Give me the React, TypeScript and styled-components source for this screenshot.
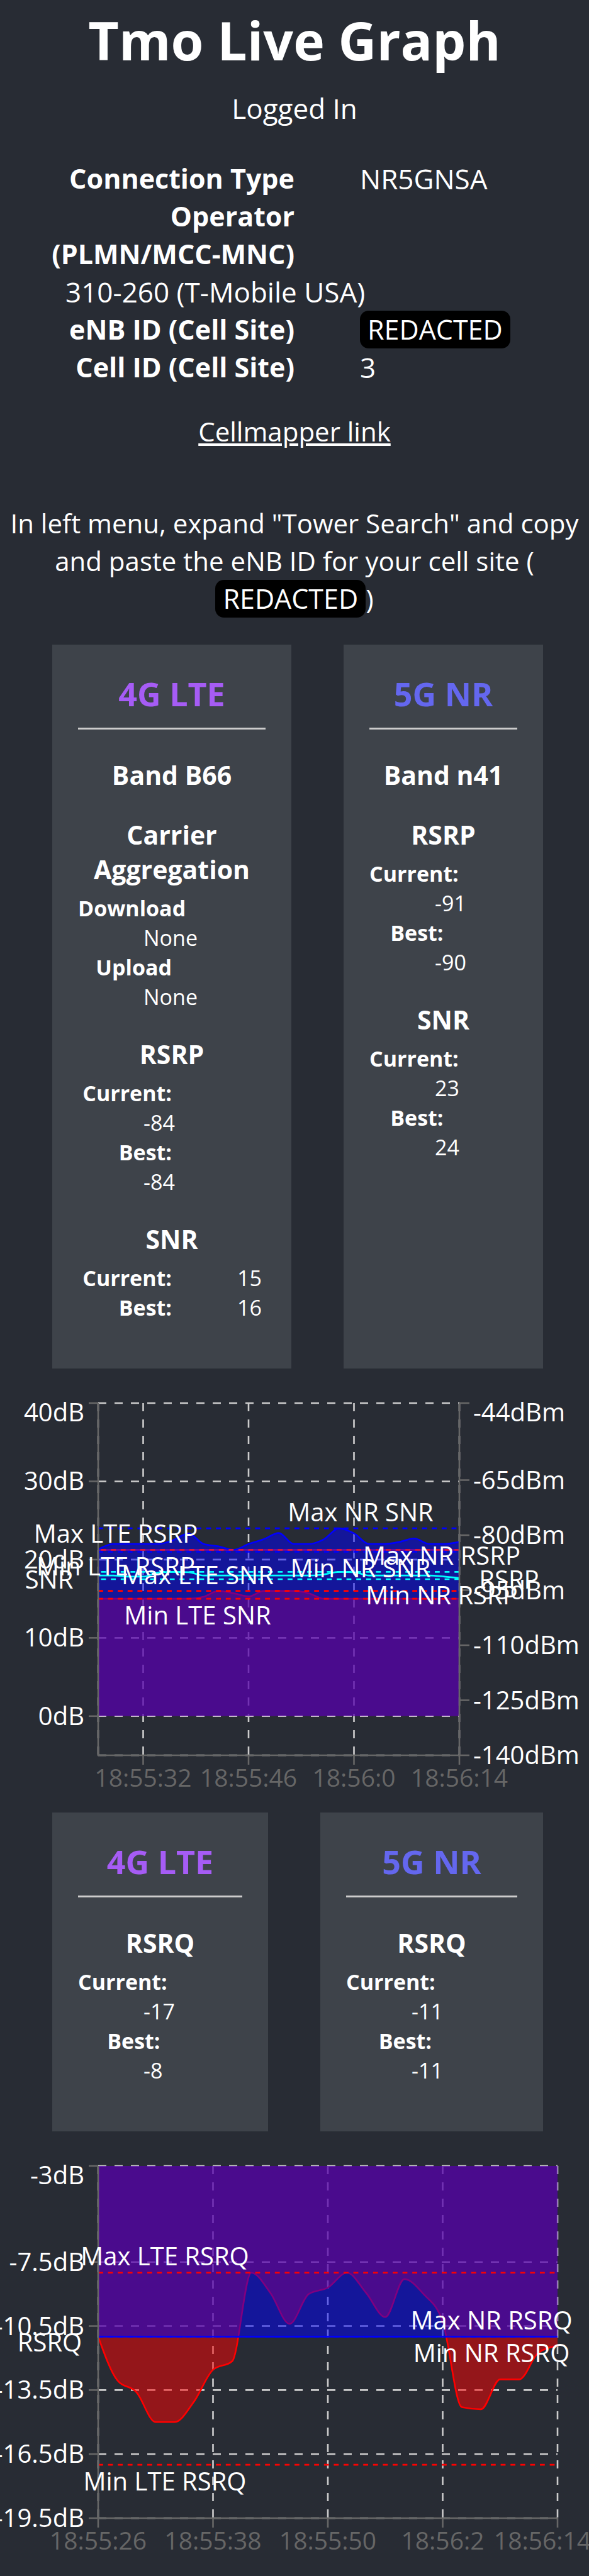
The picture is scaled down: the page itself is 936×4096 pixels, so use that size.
import React from "react";
import styled, { createGlobalStyle } from "styled-components";

const GlobalStyle = createGlobalStyle`
  *, *::before, *::after { box-sizing: border-box; }
  body {
    margin: 0;
    background: #282c34;
    color: #fff;
    font-family: "Segoe UI", "Open Sans", "Noto Sans", sans-serif;
    overflow-x: hidden;
  }
`;

const Page = styled.main`
  display: flex;
  flex-direction: column;
  text-align: center;
  line-height: 60px;
`;

const Title = styled.h1`
  margin: 4px 0 18px;
  font-size: 84px;
  line-height: 120px;
`;

const Status = styled.p`
  margin: 0 0 52px;
  font-size: 44px;
`;

const InfoList = styled.dl`
  margin: 0;
  text-align: left;
`;

const InfoTerm = styled.dt`
  display: inline-block;
  width: 50%;
  vertical-align: top;
  font-size: 43px;
  font-weight: 700;
  text-align: right;
`;

const NoBreak = styled.span`
  white-space: nowrap;
`;

const InfoValue = styled.dd`
  display: inline-block;
  margin: 0 0 0 104px;
  vertical-align: top;
  font-size: 44px;
`;

const Redacted = styled.span`
  display: inline-block;
  padding: 0 12px;
  border-radius: 14px;
  background: #000;
  font-size: 43px;
  vertical-align: top;
`;

const LinkLine = styled.p`
  margin: 42px 0 86px;
  font-size: 42px;
`;

const MapLink = styled.a`
  color: #fff;
  text-decoration: underline;
`;

const Note = styled.p`
  margin: 0 0 43px;
  font-size: 42px;
`;

const CardRow = styled.section<{ $columns: string }>`
  display: grid;
  grid-template-columns: ${(p) => p.$columns};
  gap: 83px;
  margin-bottom: 42px;
  padding: 0 73px 0 83px;
`;

const Card = styled.article`
  padding: 42px 41px 73px;
  background: #3e434a;
`;

const CardTitle = styled.h2<{ $color: string }>`
  margin: 0;
  color: ${(p) => p.$color};
  font-size: 52px;
  line-height: 72px;
`;

const Rule = styled.hr`
  height: 3px;
  margin: 18px 0 45px;
  border: 0;
  background: #ccc;
`;

const Metric = styled.div`
  & + & {
    margin-top: 40px;
  }
`;

const MetricTitle = styled.h3`
  margin: 0;
  font-size: 41px;
  line-height: 55px;
`;

const MetricList = styled.dl`
  margin: 11px 0 0;
  font-size: 34px;
  line-height: 47px;
  text-align: left;
`;

const MetricTerm = styled.dt`
  display: inline-block;
  width: 50%;
  font-weight: 700;
  text-align: right;
  vertical-align: top;
`;

const MetricValue = styled.dd`
  display: inline-block;
  margin: 0 0 0 104px;
  vertical-align: top;
`;

const ChartSvg = styled.svg`
  display: block;
  width: 100%;
  height: auto;
  overflow: hidden;
`;

const Label = styled.text`
  fill: #fff;
  font-size: 40px;
`;

const TimeLabel = styled.text`
  fill: #666;
  font-size: 39px;
`;

type Pair = [string, string];
type Point = [number, number];
type MetricData = { title: string; rows?: Pair[] };

const LTE = "#a65cf5";
const NR = "#6467ef";

function Metrics({ items }: { items: MetricData[] }) {
  return (
    <>
      {items.map((item) => (
        <Metric key={item.title}>
          <MetricTitle>{item.title}</MetricTitle>
          {item.rows && (
            <MetricList>
              {item.rows.map(([term, value]) => (
                <React.Fragment key={term}>
                  <MetricTerm>{term}</MetricTerm>
                  <MetricValue>{value}</MetricValue>
                </React.Fragment>
              ))}
            </MetricList>
          )}
        </Metric>
      ))}
    </>
  );
}

function SignalCard({ title, color, items }: { title: string; color: string; items: MetricData[] }) {
  return (
    <Card>
      <CardTitle $color={color}>{title}</CardTitle>
      <Rule />
      <Metrics items={items} />
    </Card>
  );
}

/** Cubic interpolation that never overshoots between neighbouring samples. */
function monotone(points: Point[]): string {
  const n = points.length;
  const slope = (i: number) => (points[i + 1][1] - points[i][1]) / (points[i + 1][0] - points[i][0]);
  const m = points.map((_, i) => {
    if (i === 0 || i === n - 1) return 0;
    const a = slope(i - 1);
    const b = slope(i);
    return a * b <= 0 ? 0 : Math.sign(a) * Math.min(Math.abs(a), Math.abs(b), 0.25 * Math.abs(a + b)) * 2;
  });
  m[0] = 1.5 * slope(0) - m[1] / 2;
  m[n - 1] = 1.5 * slope(n - 2) - m[n - 2] / 2;
  let d = `M${points[0][0]},${points[0][1]}`;
  for (let i = 0; i < n - 1; i++) {
    const [x0, y0] = points[i];
    const [x1, y1] = points[i + 1];
    const h = (x1 - x0) / 3;
    d += `C${x0 + h},${y0 + h * m[i]} ${x1 - h},${y1 - h * m[i + 1]} ${x1},${y1}`;
  }
  return d;
}

const TOP = 13;
const BOTTOM = 573;
const LEFT = 156;

const scale = (max: number, min: number) => (v: number) => TOP + ((max - v) / (max - min)) * (BOTTOM - TOP);

function sample(values: number[], right: number, y: (v: number) => number): Point[] {
  return values.map((v, i) => [LEFT + ((right - LEFT) * i) / (values.length - 1), y(v)]);
}

function Area({ points, base, color }: { points: Point[]; base: number; color: string }) {
  const d = monotone(points);
  return (
    <g>
      <path d={`${d}V${base}H${points[0][0]}Z`} fill={color} fillOpacity={0.5} />
      <path d={d} fill="none" stroke={color} strokeWidth={2.6} />
    </g>
  );
}

function Grid({ xs, ys, right }: { xs: number[]; ys: number[]; right: number }) {
  return (
    <g stroke="#ccc" strokeWidth={2.6} strokeDasharray="13 13">
      {ys.map((y) => <line key={`y${y}`} x1={LEFT} x2={right} y1={y} y2={y} />)}
      {xs.map((x) => <line key={`x${x}`} x1={x} x2={x} y1={TOP} y2={BOTTOM} />)}
    </g>
  );
}

function RefLine({ y, from, to, color }: { y: number; from: number; to: number; color: string }) {
  return <line x1={from} x2={to} y1={y} y2={y} stroke={color} strokeWidth={2.6} strokeDasharray="7.8 7.8" />;
}

const snrY = scale(40, -5);
const rsrpY = scale(-44, -140);
const rsrqY = scale(-3, -19.5);

const nrSnr = [21.3, 22, 22, 22, 22, 22.5, 23.35, 22, 21.7, 21.25, 22, 22.6, 23.4, 22, 22, 22.6, 24, 23.35, 22, 22, 22.25, 22.7, 22, 22, 22.25];
const lteSnr = [15, 15, 15, 15, 15, 15, 15, 15.25, 16, 15.7, 15.3, 16, 16, 16, 15.7, 15, 15, 15, 15, 15, 15, 15, 15, 15, 15];
const nrRsrp = [-91, -91, -91.3, -91.3, -90.2, -90, -90.1, -91, -91, -91, -91, -91, -91, -91, -91, -90.7, -90, -90.1, -91, -91, -91, -91, -91, -91.3, -91.7];
const lteRsrq = [-11, -13.04, -13.6, -15, -15, -14.05, -12.55, -12.15, -8, -8.95, -10.4, -9, -8.7, -8, -8.95, -10.08, -8.3, -9, -10.3, -14.3, -14.4, -13, -13, -11.75, -11.43];

function SnrChart() {
  const right = 730;
  const xs = [227.5, 395, 562.5, right];
  const left = [40, 30, 20, 10, 0];
  const dbm = [-44, -65, -80, -95, -110, -125, -140];
  const times = ["18:55:32", "18:55:46", "18:56:0", "18:56:14"];
  return (
    <ChartSvg viewBox="0 0 936 664" role="img" aria-label="SNR and RSRP over time">
      <Grid xs={[LEFT, ...xs]} ys={[...left.map(snrY), BOTTOM]} right={right} />
      <line x1={LEFT} x2={right} y1={rsrpY(-84)} y2={rsrpY(-84)} stroke="#dc143c" strokeWidth={2.6} />
      <Area points={sample(lteSnr, right, snrY)} base={snrY(0)} color="#f00" />
      <Area points={sample(nrSnr, right, snrY)} base={snrY(0)} color="#00f" />
      <path d={monotone(sample(nrRsrp, right, rsrpY))} fill="none" stroke="#0ff" strokeWidth={2.6} />
      <RefLine y={snrY(24)} from={LEFT} to={right} color="#00f" />
      <RefLine y={snrY(21)} from={LEFT} to={right} color="#00f" />
      <RefLine y={snrY(16)} from={LEFT} to={right} color="#f00" />
      <RefLine y={snrY(15)} from={LEFT} to={right} color="#f00" />
      <RefLine y={rsrpY(-84)} from={right} to={LEFT} color="#dc143c" />
      <RefLine y={rsrpY(-90)} from={right} to={LEFT} color="#0ff" />
      <RefLine y={rsrpY(-92)} from={right} to={LEFT} color="#0ff" />
      <g stroke="#666" strokeWidth={2.6}>
        <path d={`M${LEFT},${TOP}V${BOTTOM}H${right}V${TOP}`} fill="none" />
        {left.map((v) => <line key={v} x1={LEFT - 15} x2={LEFT} y1={snrY(v)} y2={snrY(v)} />)}
        {dbm.map((v) => <line key={v} x1={right} x2={right + 16} y1={rsrpY(v)} y2={rsrpY(v)} />)}
        {xs.map((x) => <line key={x} x1={x} x2={x} y1={BOTTOM} y2={BOTTOM + 15} />)}
      </g>
      {left.map((v) => <Label key={v} x={134} y={v === 40 ? 42 : snrY(v) + 14} textAnchor="end">{`${v}dB`}</Label>)}
      {dbm.map((v) => <Label key={v} x={752} y={v === -44 ? 42 : rsrpY(v) + 14}>{`${v}dBm`}</Label>)}
      {times.map((t, i) => <TimeLabel key={t} x={xs[i]} y={623} textAnchor="middle">{t}</TimeLabel>)}
      <g textAnchor="middle">
        <Label x={78} y={308}>SNR</Label>
        <Label x={809} y={308}>RSRP</Label>
        <Label x={573} y={201}>Max NR SNR</Label>
        <Label x={573} y={290}>Min NR SNR</Label>
        <Label x={314} y={301}>Max LTE SNR</Label>
        <Label x={314} y={365}>Min LTE SNR</Label>
        <Label x={184} y={235}>Max LTE RSRP</Label>
        <Label x={184} y={287}>Min LTE RSRP</Label>
        <Label x={702} y={270}>Max NR RSRP</Label>
        <Label x={702} y={333}>Min NR RSRP</Label>
      </g>
    </ChartSvg>
  );
}

function RsrqChart() {
  const right = 886;
  const xs = [LEFT, 338.5, 521, 703.5, right];
  const ticks = [-3, -7.5, -10.5, -13.5, -16.5, -19.5];
  const times = ["18:55:26", "18:55:38", "18:55:50", "18:56:2", "18:56:14"];
  return (
    <ChartSvg viewBox="0 0 936 664" role="img" aria-label="RSRQ over time">
      <Grid xs={xs} ys={ticks.map(rsrqY)} right={right} />
      <Area points={sample(lteRsrq, right, rsrqY)} base={TOP} color="#f00" />
      <Area points={sample(Array(25).fill(-11), right, rsrqY)} base={TOP} color="#00f" />
      <RefLine y={rsrqY(-11)} from={LEFT} to={right} color="#00f" />
      <RefLine y={rsrqY(-8)} from={LEFT} to={right} color="#f00" />
      <RefLine y={rsrqY(-17)} from={LEFT} to={right} color="#f00" />
      <g stroke="#666" strokeWidth={2.6}>
        <path d={`M${LEFT},${TOP}V${BOTTOM}H${right}`} fill="none" />
        {ticks.map((v) => <line key={v} x1={LEFT - 15} x2={LEFT} y1={rsrqY(v)} y2={rsrqY(v)} />)}
        {xs.map((x) => <line key={x} x1={x} x2={x} y1={BOTTOM} y2={BOTTOM + 15} />)}
      </g>
      {ticks.map((v) => <Label key={v} x={134} y={v === -3 ? 42 : rsrqY(v) + 14} textAnchor="end">{`${v}dB`}</Label>)}
      {times.map((t, i) => <TimeLabel key={t} x={i === 4 ? 862 : xs[i]} y={623} textAnchor="middle">{t}</TimeLabel>)}
      <g textAnchor="middle">
        <Label x={79} y={308}>RSRQ</Label>
        <Label x={262} y={171}>Max LTE RSRQ</Label>
        <Label x={262} y={529}>Min LTE RSRQ</Label>
        <Label x={781} y={273}>Max NR RSRQ</Label>
        <Label x={781} y={325}>Min NR RSRQ</Label>
      </g>
    </ChartSvg>
  );
}

const info: { id: string; term: React.ReactNode; value: React.ReactNode }[] = [
  { id: "type", term: "Connection Type", value: "NR5GNSA" },
  { id: "operator", term: <>Operator <NoBreak>(PLMN/MCC-MNC)</NoBreak></>, value: "310-260 (T-Mobile USA)" },
  { id: "enb", term: "eNB ID (Cell Site)", value: <Redacted>REDACTED</Redacted> },
  { id: "cell", term: "Cell ID (Cell Site)", value: "3" },
];

export default function App() {
  return (
    <Page>
      <GlobalStyle />
      <Title>Tmo Live Graph</Title>
      <Status>Logged In</Status>
      <InfoList>
        {info.map(({ id, term, value }) => (
          <React.Fragment key={id}>
            <InfoTerm>{term}</InfoTerm>
            <InfoValue>{value}</InfoValue>
          </React.Fragment>
        ))}
      </InfoList>
      <LinkLine>
        <MapLink href="#cellmapper">Cellmapper link</MapLink>
      </LinkLine>
      <Note>
        In left menu, expand "Tower Search" and copy and paste the eNB ID for your cell site (
        <Redacted>REDACTED</Redacted>)
      </Note>

      <CardRow $columns="minmax(0, 380fr) minmax(0, 317fr)">
        <SignalCard
          title="4G LTE"
          color={LTE}
          items={[
            { title: "Band B66" },
            { title: "Carrier Aggregation", rows: [["Download", "None"], ["Upload", "None"]] },
            { title: "RSRP", rows: [["Current:", "-84"], ["Best:", "-84"]] },
            { title: "SNR", rows: [["Current:", "15"], ["Best:", "16"]] },
          ]}
        />
        <SignalCard
          title="5G NR"
          color={NR}
          items={[
            { title: "Band n41" },
            { title: "RSRP", rows: [["Current:", "-91"], ["Best:", "-90"]] },
            { title: "SNR", rows: [["Current:", "23"], ["Best:", "24"]] },
          ]}
        />
      </CardRow>
      <SnrChart />

      <CardRow $columns="minmax(0, 343fr) minmax(0, 354fr)">
        <SignalCard title="4G LTE" color={LTE} items={[{ title: "RSRQ", rows: [["Current:", "-17"], ["Best:", "-8"]] }]} />
        <SignalCard title="5G NR" color={NR} items={[{ title: "RSRQ", rows: [["Current:", "-11"], ["Best:", "-11"]] }]} />
      </CardRow>
      <RsrqChart />
    </Page>
  );
}
